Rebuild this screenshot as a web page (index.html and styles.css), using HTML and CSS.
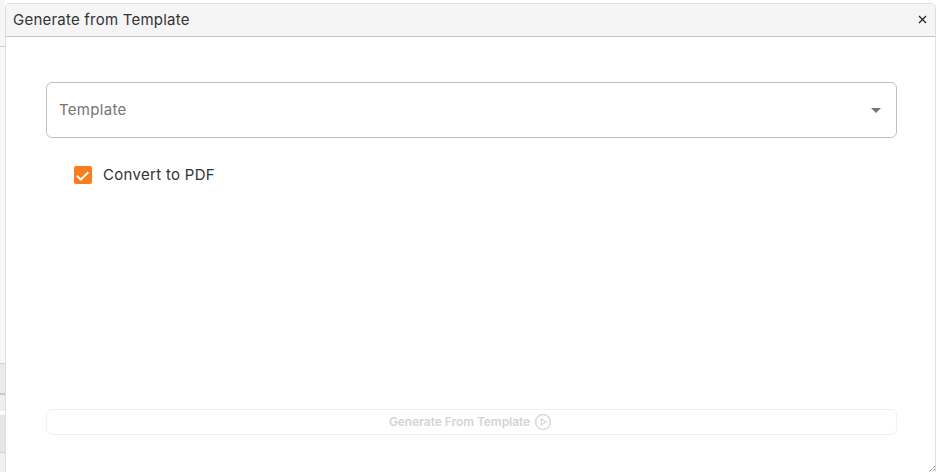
FILE: index.html
```html
<!DOCTYPE html>
<html lang="en">
  <head>
    <meta charset="UTF-8" />
    <title>Generate from Template</title>
    <link rel="stylesheet" href="styles.css">
  </head>
  <body>
    <div class="backdrop">
      <div class="strip strip-a"></div>
      <div class="strip strip-b"></div>
      <div class="strip strip-c"></div>
      <div class="strip strip-d"></div>
      <div class="strip strip-e"></div>
      <div class="strip strip-f"></div>
      <div class="strip strip-g"></div>
    </div>
    <div class="dialog">
      <div class="dialog-head">
        <span class="dialog-title">Generate from Template</span>
        <button class="dialog-close" type="button" aria-label="Close">
          <svg width="9" height="9" viewBox="0 0 9 9"><path d="M1 1l7 7M8 1L1 8" stroke="#222" stroke-width="1.2" fill="none"/></svg>
        </button>
      </div>
      <div class="dialog-body">
        <div class="select">
          <span class="select-label">Template</span>
          <span class="select-arrow"></span>
        </div>
        <label class="check">
          <span class="check-box">
            <svg width="18" height="18" viewBox="0 0 18 18"><path d="M2.8 9.7l4 4 7.5-7.5" stroke="#fff" stroke-width="2" fill="none"/></svg>
          </span>
          <span class="check-text">Convert to PDF</span>
        </label>
        <button class="generate" type="button" disabled>
          <span>Generate From Template</span>
          <svg width="18" height="18" viewBox="0 0 18 18"><circle cx="9" cy="9" r="7.5" stroke="#d9d9d9" stroke-width="1.5" fill="none"/><path d="M7.3 5.9L12 9l-4.7 3.1z" stroke="#d9d9d9" stroke-width="1.3" fill="none"/></svg>
        </button>
      </div>
      <svg class="grip" width="6" height="6" viewBox="0 0 6 6"><path d="M6 0L0 6M6 3L3 6" stroke="#555" stroke-width="1" stroke-dasharray="1 1" fill="none"/></svg>
    </div>
  </body>
</html>
```

FILE: styles.css
```css
html,
body {
  margin: 0;
  padding: 0;
  height: 472px;
  overflow: hidden;
}

body {
  background-color: #fff;
  font-family: "Inter", "Liberation Sans", sans-serif;
  color: #333;
}

/* sliver of the page left of the dialog */
.backdrop {
  display: flex;
  flex-direction: column;
  width: 5px;
  height: 472px;
}

.strip {
  border-bottom: 1px solid #d2d2d2;
}

.strip-a {
  height: 46px;
  background-color: #f6f6f6;
}

.strip-b {
  height: 317px;
  background-color: #f8f8f8;
}

.strip-c {
  height: 29px;
  background-color: #ebebeb;
  border-bottom: 2px solid #c8c8c8;
}

.strip-d {
  height: 16px;
  background-color: #efefef;
  border-bottom: 0;
}

.strip-e {
  height: 4px;
  background-color: #fbfbfb;
  border-bottom-color: #e4e4e4;
}

.strip-f {
  height: 36px;
  background-color: #e6e6e6;
}

.strip-g {
  height: 19px;
  background-color: #f0f0f0;
  border-bottom: 0;
}

.dialog {
  position: absolute;
  left: 5px;
  top: 3px;
  width: 931px;
  height: 480px;
  background-color: #fff;
  border: 1px solid #dedede;
  border-radius: 5px 5px 0 0;
  box-sizing: border-box;
}

.dialog-head {
  display: flex;
  align-items: center;
  justify-content: space-between;
  height: 33px;
  padding: 0 8px 2px 7px;
  background-color: #f5f5f5;
  border-bottom: 1px solid #c4c4c4;
  border-radius: 5px 5px 0 0;
  box-sizing: border-box;
}

.dialog-title {
  font-size: 15px;
  letter-spacing: 0.22px;
  color: #333;
}

.dialog-close {
  display: flex;
  padding: 0;
  border: 0;
  background: none;
}

.dialog-body {
  padding: 45px 38px 0 40px;
}

.select {
  display: flex;
  align-items: center;
  justify-content: space-between;
  height: 56px;
  padding: 0 15px 2px 12px;
  border: 1px solid #bfbfbf;
  border-radius: 6px;
  box-sizing: border-box;
}

.select-label {
  font-size: 15px;
  letter-spacing: 0.3px;
  color: #757575;
}

.select-arrow {
  width: 0;
  height: 0;
  margin-top: 2px;
  border-left: 5px solid transparent;
  border-right: 5px solid transparent;
  border-top: 5px solid #757575;
}

.check {
  display: flex;
  align-items: center;
  gap: 11px;
  margin: 27px 0 0 28px;
}

.check-box {
  display: flex;
  width: 18px;
  height: 18px;
  background-color: #f97c1e;
  border-radius: 2px;
}

.check-text {
  font-size: 15px;
  letter-spacing: 0.3px;
  color: #333;
}

.generate {
  display: flex;
  align-items: center;
  justify-content: center;
  gap: 4px;
  width: 100%;
  height: 26px;
  margin-top: 225px;
  padding: 0 2px 1px 0;
  background: #fff;
  border: 1px solid #f0f0f0;
  border-radius: 6px;
  font-family: inherit;
  font-size: 12px;
  font-weight: 600;
  letter-spacing: -0.05px;
  color: #d4d4d4;
}

.grip {
  position: absolute;
  right: 0;
  top: 462px;
}
```
